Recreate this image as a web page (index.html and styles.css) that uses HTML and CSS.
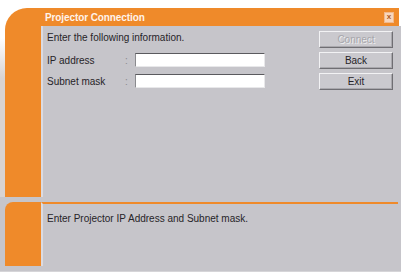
FILE: index.html
```html
<!DOCTYPE html>
<html>
<head>
<meta charset="utf-8">
<link rel="stylesheet" href="styles.css">
</head>
<body>
<div class="window">
  <div class="top">
    <div class="side"></div>
    <div class="main">
      <div class="titlebar">
        <span class="title">Projector Connection</span>
        <span class="close">x</span>
      </div>
      <div class="content">
        <div class="form">
          <p class="intro">Enter the following information.</p>
          <div class="row"><span class="label">IP address</span><span class="colon">:</span><span class="input"></span></div>
          <div class="row"><span class="label">Subnet mask</span><span class="colon">:</span><span class="input"></span></div>
        </div>
        <div class="buttons">
          <button class="btn disabled">Connect</button>
          <button class="btn">Back</button>
          <button class="btn">Exit</button>
        </div>
      </div>
    </div>
  </div>
  <div class="bottom">
    <div class="side2"></div>
    <div class="msg">Enter Projector IP Address and Subnet mask.</div>
  </div>
</div>
</body>
</html>
```
FILE: styles.css
```css
html, body {
  margin: 0;
  padding: 0;
}
body {
  width: 401px;
  height: 276px;
  overflow: hidden;
  background: #ffffff;
  font-family: "Liberation Sans", Arial, sans-serif;
  font-size: 10px;
  color: #262428;
}
.window {
  margin-top: 8px;
  height: 264px;
  box-sizing: border-box;
  padding-bottom: 5px;
  background: #c6c5ca;
  display: flex;
  flex-direction: column;
  gap: 5px;
  border-bottom: 1px solid #d6d5d8;
}
.top {
  height: 190px;
  display: flex;
  background: linear-gradient(#ffffff 0, #ffffff 30px, #d8d3d2 70px);
}
.side {
  width: 36px;
  margin-left: 5px;
  background: #ef8a2a;
  border-top-left-radius: 22px;
}
.main {
  flex: 1;
  display: flex;
  flex-direction: column;
}
.titlebar {
  height: 18px;
  background: #ef8a2a;
  display: flex;
  align-items: center;
  justify-content: space-between;
  padding: 0 5px 0 4px;
  margin-right: 2px;
}
.title {
  color: #fff3ea;
  font-weight: bold;
  font-size: 10px;
  letter-spacing: -0.1px;
}
.close {
  width: 8px;
  height: 9px;
  background: #f7d6bd;
  border: 1px solid #f2b98c;
  color: #b05a20;
  font-size: 8px;
  line-height: 8px;
  text-align: center;
  font-weight: bold;
}
.content {
  flex: 1;
  background: #c6c5ca;
  border-left: 2px solid #dcdbe0;
  display: flex;
  justify-content: space-between;
  padding: 5px 8px 0 4px;
}
.intro {
  margin: 1px 0 0 0;
  line-height: 12px;
}
.row {
  display: flex;
  align-items: center;
  height: 14px;
  margin-top: 9px;
}
.row + .row {
  margin-top: 7px;
}
.label {
  width: 78px;
}
.colon {
  width: 10px;
  color: #8a8a8e;
}
.input {
  width: 128px;
  height: 12px;
  background: #ffffff;
  border-top: 1px solid #5a5a5e;
  border-left: 1px solid #8a8a8e;
  border-right: 1px solid #e8e8ea;
  border-bottom: 1px solid #e8e8ea;
}
.buttons {
  display: flex;
  flex-direction: column;
  gap: 4px;
}
.btn {
  width: 74px;
  height: 17px;
  padding: 0;
  font-family: "Liberation Sans", Arial, sans-serif;
  font-size: 10px;
  color: #262428;
  background: #cac9ce;
  border: 1px solid;
  border-color: #f2f2f4 #6f6e73 #6f6e73 #f2f2f4;
  box-shadow: inset -1px -1px 0 #a9a8ad;
}
.btn.disabled {
  color: #a7a6ab;
  text-shadow: 1px 1px 0 #eeeeef;
}
.bottom {
  height: 64px;
  display: flex;
}
.side2 {
  width: 36px;
  margin-left: 5px;
  background: #ef8a2a;
  border-top-left-radius: 8px;
}
.msg {
  flex: 1;
  margin-right: 3px;
  border-top: 2px solid #ef8a2a;
  border-left: 2px solid #dcdbe0;
  padding: 9px 4px 0 4px;
  line-height: 12px;
}
```
